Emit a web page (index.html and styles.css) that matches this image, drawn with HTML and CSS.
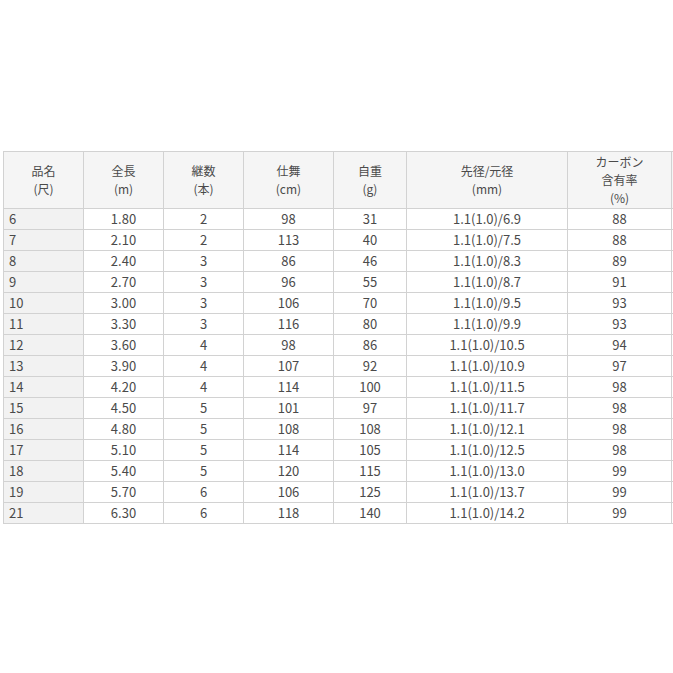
FILE: index.html
```html
<!DOCTYPE html>
<html lang="ja">
<head>
<meta charset="utf-8">
<link rel="stylesheet" href="styles.css">
</head>
<body>
<div class="page">
<table class="spec">
<colgroup>
<col class="c1"><col class="c2"><col class="c3"><col class="c4"><col class="c5"><col class="c6"><col class="c7"><col class="c8">
</colgroup>
<thead>
<tr>
<th>品名<br>(尺)</th>
<th>全長<br>(m)</th>
<th>継数<br>(本)</th>
<th>仕舞<br>(cm)</th>
<th>自重<br>(g)</th>
<th>先径/元径<br>(mm)</th>
<th>カーボン<br>含有率<br>(%)</th>
<th></th>
</tr>
</thead>
<tbody>
<tr><td class="name">6</td><td>1.80</td><td>2</td><td>98</td><td>31</td><td>1.1(1.0)/6.9</td><td>88</td><td></td></tr>
<tr><td class="name">7</td><td>2.10</td><td>2</td><td>113</td><td>40</td><td>1.1(1.0)/7.5</td><td>88</td><td></td></tr>
<tr><td class="name">8</td><td>2.40</td><td>3</td><td>86</td><td>46</td><td>1.1(1.0)/8.3</td><td>89</td><td></td></tr>
<tr><td class="name">9</td><td>2.70</td><td>3</td><td>96</td><td>55</td><td>1.1(1.0)/8.7</td><td>91</td><td></td></tr>
<tr><td class="name">10</td><td>3.00</td><td>3</td><td>106</td><td>70</td><td>1.1(1.0)/9.5</td><td>93</td><td></td></tr>
<tr><td class="name">11</td><td>3.30</td><td>3</td><td>116</td><td>80</td><td>1.1(1.0)/9.9</td><td>93</td><td></td></tr>
<tr><td class="name">12</td><td>3.60</td><td>4</td><td>98</td><td>86</td><td>1.1(1.0)/10.5</td><td>94</td><td></td></tr>
<tr><td class="name">13</td><td>3.90</td><td>4</td><td>107</td><td>92</td><td>1.1(1.0)/10.9</td><td>97</td><td></td></tr>
<tr><td class="name">14</td><td>4.20</td><td>4</td><td>114</td><td>100</td><td>1.1(1.0)/11.5</td><td>98</td><td></td></tr>
<tr><td class="name">15</td><td>4.50</td><td>5</td><td>101</td><td>97</td><td>1.1(1.0)/11.7</td><td>98</td><td></td></tr>
<tr><td class="name">16</td><td>4.80</td><td>5</td><td>108</td><td>108</td><td>1.1(1.0)/12.1</td><td>98</td><td></td></tr>
<tr><td class="name">17</td><td>5.10</td><td>5</td><td>114</td><td>105</td><td>1.1(1.0)/12.5</td><td>98</td><td></td></tr>
<tr><td class="name">18</td><td>5.40</td><td>5</td><td>120</td><td>115</td><td>1.1(1.0)/13.0</td><td>99</td><td></td></tr>
<tr><td class="name">19</td><td>5.70</td><td>6</td><td>106</td><td>125</td><td>1.1(1.0)/13.7</td><td>99</td><td></td></tr>
<tr><td class="name">21</td><td>6.30</td><td>6</td><td>118</td><td>140</td><td>1.1(1.0)/14.2</td><td>99</td><td></td></tr>
</tbody>
</table>
</div>
</body>
</html>
```
FILE: styles.css
```css
html, body {
  margin: 0;
  padding: 0;
  background: #fff;
  overflow: hidden;
  width: 673px;
  height: 673px;
}
.page {
  padding: 151px 0 0 3px;
}
.spec {
  border-collapse: collapse;
  table-layout: fixed;
  width: 800px;
  font-family: "Noto Sans CJK JP", "Noto Sans", sans-serif;
  font-size: 12px;
  color: #4a4a4a;
}
.c1 { width: 80px; }
.c2 { width: 80px; }
.c3 { width: 80px; }
.c4 { width: 90px; }
.c5 { width: 73px; }
.c6 { width: 161px; }
.c7 { width: 104px; }
.c8 { width: 132px; }
.spec th, .spec td {
  border: 1px solid #d2d2d2;
  padding: 0;
  text-align: center;
  vertical-align: middle;
  font-weight: normal;
}
.spec th {
  background: #f5f5f5;
  height: 56px;
  line-height: 18px;
}
.spec td {
  height: 20px;
  line-height: 20px;
  font-size: 13px;
}
.spec td.name {
  text-align: left;
  padding-left: 5px;
  background: #f2f2f2;
}
```
